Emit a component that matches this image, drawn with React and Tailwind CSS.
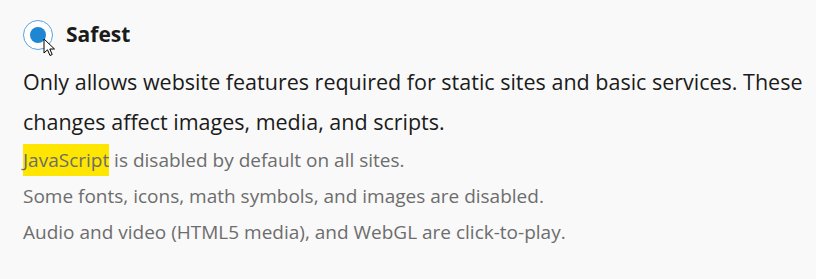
export default function App() {
    return (
        <div className="w-[816px] h-[279px] bg-[#f9f9f9] font-['Open_Sans','Noto_Sans',sans-serif] pl-[23px] pt-[20px]">
            <div className="flex items-center gap-[13px] h-[30px]">
                <div className="relative w-[30px] h-[30px] rounded-full border border-[#5aa3e0] bg-white flex items-center justify-center">
                    <div className="w-[16px] h-[16px] rounded-full bg-[#1f86d4]" />
                    {/* mouse cursor */}
                    <svg className="absolute left-[19px] top-[17px]" width="14" height="20" viewBox="0 0 14 20">
                        <path d="M1 1 L1 15 L4.5 11.8 L7 17.5 L9.2 16.5 L6.8 11 L11.5 11 Z" fill="white" stroke="black" strokeWidth="1" strokeLinejoin="round" />
                    </svg>
                </div>
                <span className="text-[21px] font-bold text-[#1b1b1b]">Safest</span>
            </div>

            <p className="mt-[12px] text-[21.5px] leading-[40px] text-[#1b1b1b] w-[785px]">
                Only allows website features required for static sites and basic services. These changes affect images, media, and scripts.
            </p>

            <div className="text-[19px] leading-[36px] text-[#6d6d6d]">
                <p>
                    <span className="bg-[#ffe600] py-[3px]">JavaScript</span> is disabled by default on all sites.
                </p>
                <p>Some fonts, icons, math symbols, and images are disabled.</p>
                <p>Audio and video (HTML5 media), and WebGL are click-to-play.</p>
            </div>
        </div>
    );
}
